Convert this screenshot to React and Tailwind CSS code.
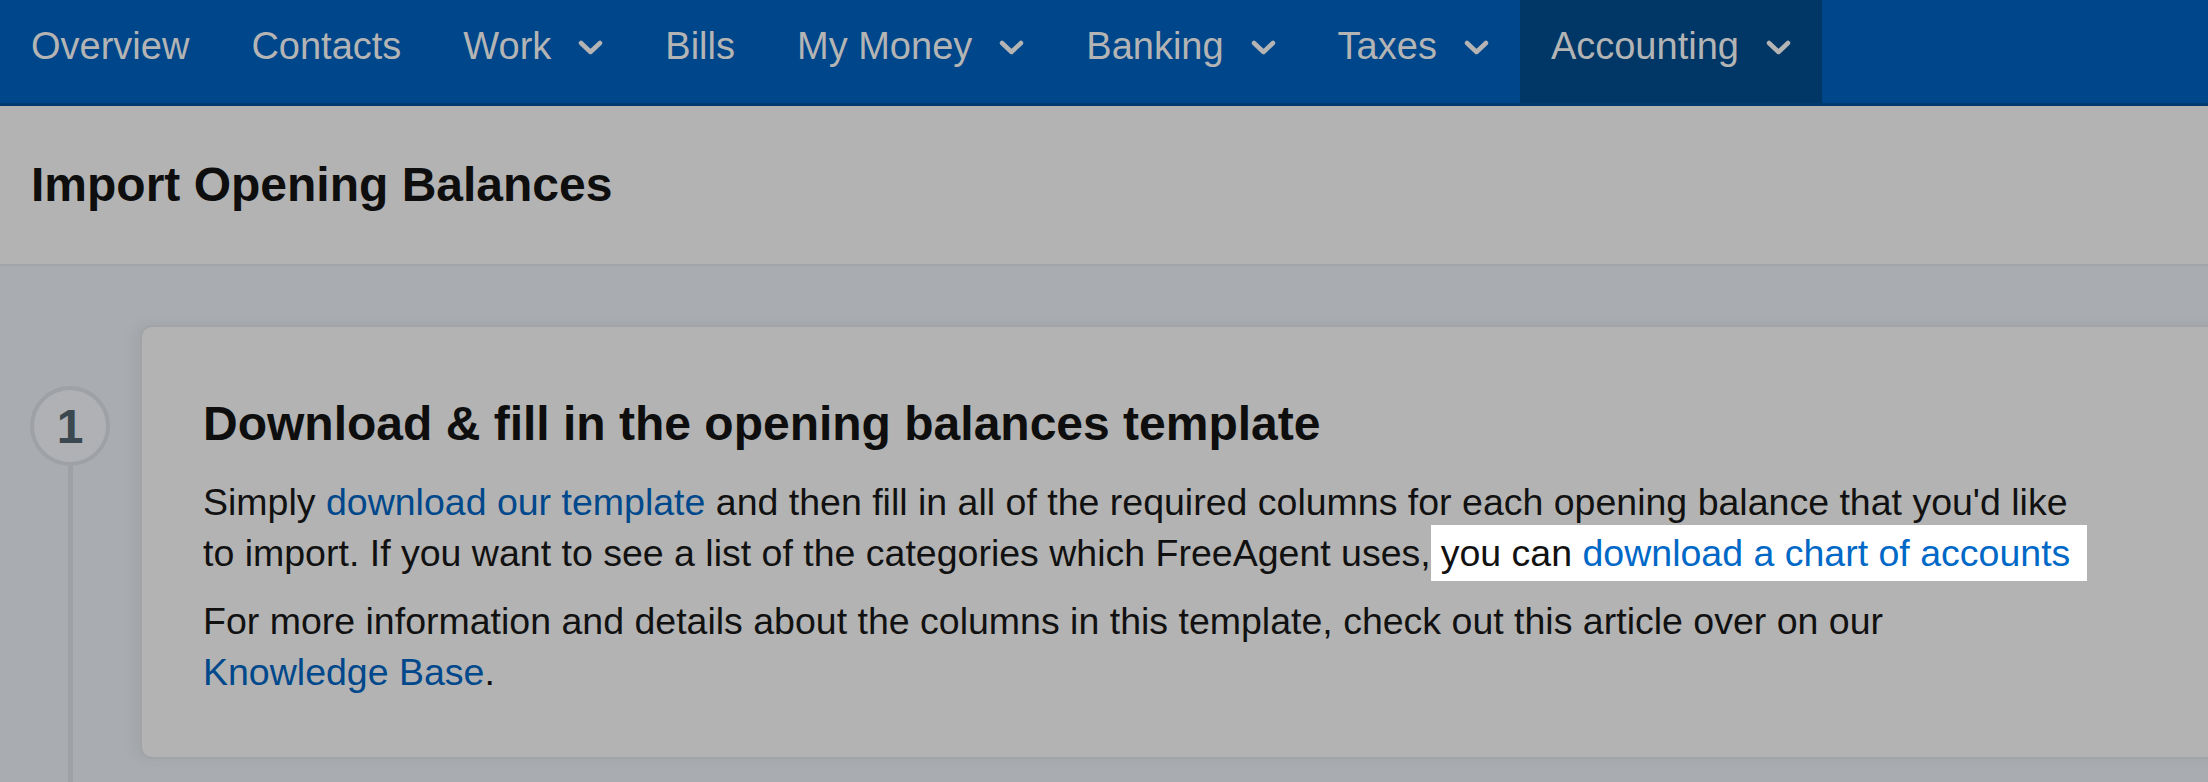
import React from 'react';

const navItems = [
  { label: 'Overview' },
  { label: 'Contacts' },
  { label: 'Work', menu: true },
  { label: 'Bills' },
  { label: 'My Money', menu: true },
  { label: 'Banking', menu: true },
  { label: 'Taxes', menu: true },
  { label: 'Accounting', menu: true, active: true },
];

const Chevron = () => (
  <svg width="25" height="15" viewBox="0 0 25 15" className="ml-[27px] mt-[3px]" fill="none">
    <path d="M3 3 L12.5 12 L22 3" stroke="#b4b4b4" strokeWidth="4.5" strokeLinecap="round" strokeLinejoin="round" />
  </svg>
);

const App = () => {
  return (
    <div className="h-[782px] flex flex-col overflow-hidden bg-[#a9adb1] font-['Liberation_Sans',Arial,sans-serif]">
      <nav className="h-[106px] shrink-0 bg-[#00468a] border-b-[3px] border-[#003a6e] flex">
        {navItems.map(item => (
          <div
            key={item.label}
            className={`flex items-start px-[31px] pt-[27px] h-[103px] ${item.active ? 'bg-[#003767]' : ''}`}
          >
            <span className="text-[38px] leading-[38px] text-[#b4b4b4] whitespace-nowrap">{item.label}</span>
            {item.menu && <div className="h-[38px] flex items-center"><Chevron /></div>}
          </div>
        ))}
      </nav>

      <header className="h-[160px] shrink-0 bg-[#b3b3b3] border-b-2 border-[#a2a4a7] flex items-center px-[31px]">
        <h1 className="text-[48px] leading-[58px] font-bold text-[#0e0e0e]">Import Opening Balances</h1>
      </header>

      <div className="flex-1 flex pl-[30px]">
        <div className="w-[80px] shrink-0 flex flex-col items-center pt-[120px]">
          <div className="w-[80px] h-[80px] rounded-full border-[4px] border-[#9ea1a5] bg-[#afb1b4] flex items-center justify-center">
            <span className="text-[48px] leading-none font-bold text-[#3b4850] mt-[2px]">1</span>
          </div>
          <div className="w-[5px] flex-1 bg-[#9ea1a5]" />
        </div>

        <div className="flex-1 ml-[30px] -mr-[40px] pt-[59px]">
          <div className="bg-[#b3b3b3] rounded-[12px] border-2 border-[#a1a3a7] shadow-[-6px_0_14px_rgba(0,0,0,0.05)] pl-[61px] pt-[68px] pb-[59px]">
            <h2 className="text-[48px] leading-[58px] font-bold text-[#0e0e0e]">
              Download &amp; fill in the opening balances template
            </h2>
            <p className="mt-[24px] text-[37.5px] leading-[51px] text-[#111111] whitespace-nowrap">
              Simply <a className="text-[#00488c]">download our template</a> and then fill in all of the required columns for each opening balance that you'd like
              <br />
              to import. If you want to see a list of the categories which FreeAgent uses,<span className="bg-white pl-[10px] pr-[17px] py-[7px] text-[#111111]">you can <a className="text-[#0068c6]">download a chart of accounts</a></span>
            </p>
            <p className="mt-[17px] text-[37.5px] leading-[51px] text-[#111111] whitespace-nowrap">
              For more information and details about the columns in this template, check out this article over on our
              <br />
              <a className="text-[#00488c]">Knowledge Base</a>.
            </p>
          </div>
        </div>
      </div>
    </div>
  );
};

export default App;
